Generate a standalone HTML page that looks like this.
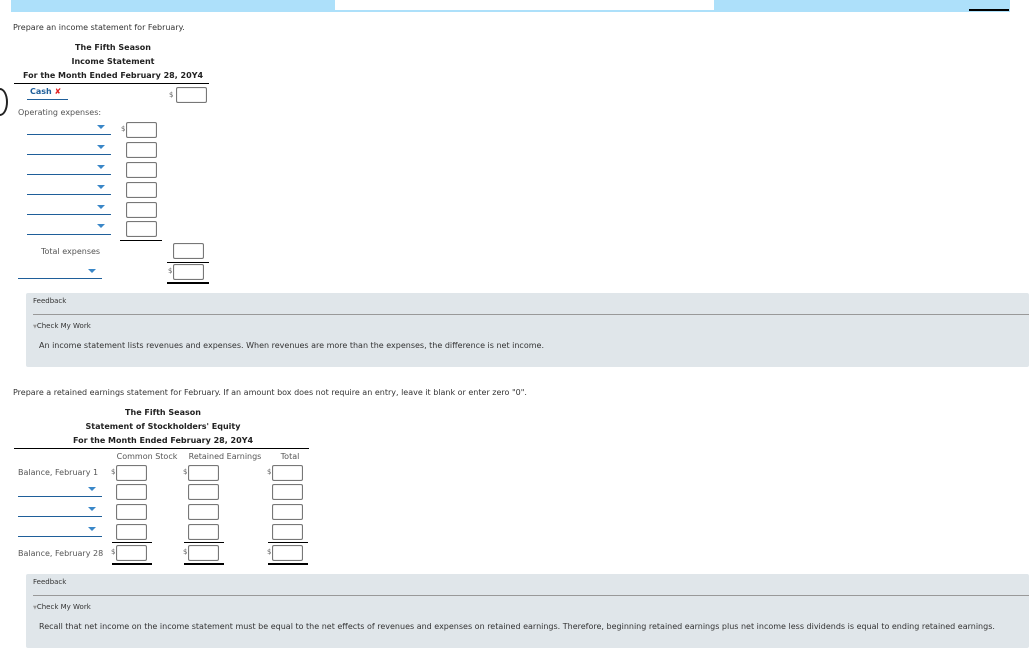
<!DOCTYPE html>
<html><head><meta charset="utf-8"><style>
body{margin:0;width:1029px;height:658px;background:#fff;position:relative;overflow:hidden;font-family:"DejaVu Sans","Liberation Sans",sans-serif;font-size:8px;color:#333}
.a{position:absolute;white-space:nowrap}
.b{font-weight:bold;color:#222}
.c{transform:translateX(-50%)}
.box{position:absolute;width:29px;height:14px;border:1px solid #777;border-radius:2px;background:#fff;box-shadow:inset 0 0 1px #aaa}
.dd{position:absolute;height:1px;background:#1f5f9a}
.ar{position:absolute;width:0;height:0;border-left:4px solid transparent;border-right:4px solid transparent;border-top:4px solid #3a87c8}
.ln{position:absolute;height:1px;background:#000}
.dl{position:absolute;height:2px;background:#000}
.d{position:absolute;font-size:7px;color:#666}
.fb{position:absolute;left:26px;width:1003px;height:74px;background:#e0e6ea;border-radius:2px}
</style></head><body>
<div class="a" style="left:11px;top:0;width:324px;height:12px;background:#ade0fa"></div>
<div class="a" style="left:335px;top:10px;width:379px;height:2px;background:#ade0fa"></div>
<div class="a" style="left:714px;top:0;width:296px;height:12px;background:#ade0fa"></div>
<div class="a" style="left:969px;top:9px;width:40px;height:2px;background:#000"></div>

<div class="a" style="left:13px;top:23px">Prepare an income statement for February.</div>
<div class="a b c" style="left:113px;top:43px">The Fifth Season</div>
<div class="a b c" style="left:113px;top:57px">Income Statement</div>
<div class="a b c" style="left:113px;top:71px">For the Month Ended February 28, 20Y4</div>
<div class="ln" style="left:14px;top:83px;width:195px"></div>
<div class="a" style="left:-8px;top:88px;width:12px;height:24px;border:2px solid #222;border-radius:50%"></div>
<div class="a b" style="left:30px;top:87px;color:#1f5f9a">Cash <span style="color:#e02020">✘</span></div>
<div class="dd" style="left:27px;top:99px;width:41px"></div>
<div class="d" style="left:169px;top:91px">$</div><div class="box" style="left:176px;top:87px"></div>
<div class="a" style="left:18px;top:108px;color:#555">Operating expenses:</div>

<div class="dd" style="left:27px;top:134px;width:84px"></div><div class="ar" style="left:97px;top:125px"></div>
<div class="dd" style="left:27px;top:154px;width:84px"></div><div class="ar" style="left:97px;top:145px"></div>
<div class="dd" style="left:27px;top:174px;width:84px"></div><div class="ar" style="left:97px;top:165px"></div>
<div class="dd" style="left:27px;top:194px;width:84px"></div><div class="ar" style="left:97px;top:185px"></div>
<div class="dd" style="left:27px;top:214px;width:84px"></div><div class="ar" style="left:97px;top:205px"></div>
<div class="dd" style="left:27px;top:234px;width:84px"></div><div class="ar" style="left:97px;top:224px"></div>
<div class="d" style="left:121px;top:125px">$</div>
<div class="box" style="left:126px;top:122px"></div>
<div class="box" style="left:126px;top:142px"></div>
<div class="box" style="left:126px;top:162px"></div>
<div class="box" style="left:126px;top:182px"></div>
<div class="box" style="left:126px;top:202px"></div>
<div class="box" style="left:126px;top:221px"></div>
<div class="ln" style="left:120px;top:240px;width:42px"></div>
<div class="a" style="left:41px;top:247px;color:#555">Total expenses</div>
<div class="box" style="left:173px;top:243px"></div>
<div class="ln" style="left:167px;top:262px;width:42px"></div>
<div class="dd" style="left:18px;top:278px;width:84px"></div><div class="ar" style="left:88px;top:269px"></div>
<div class="d" style="left:168px;top:267px">$</div><div class="box" style="left:173px;top:264px"></div>
<div class="dl" style="left:167px;top:282px;width:42px"></div>

<div class="fb" style="top:293px"></div>
<div class="a" style="left:33px;top:297px;font-size:7px">Feedback</div>
<div class="a" style="left:33px;top:314px;width:996px;height:1px;background:#999"></div>
<div class="a" style="left:33px;top:322px;font-size:7px"><span style="color:#999;font-size:5px">▼</span>Check My Work</div>
<div class="a" style="left:39px;top:341px">An income statement lists revenues and expenses. When revenues are more than the expenses, the difference is net income.</div>

<div class="a" style="left:13px;top:388px">Prepare a retained earnings statement for February. If an amount box does not require an entry, leave it blank or enter zero "0".</div>
<div class="a b c" style="left:163px;top:408px">The Fifth Season</div>
<div class="a b c" style="left:163px;top:422px">Statement of Stockholders' Equity</div>
<div class="a b c" style="left:163px;top:436px">For the Month Ended February 28, 20Y4</div>
<div class="ln" style="left:14px;top:448px;width:295px"></div>
<div class="a c" style="left:147px;top:452px;color:#555">Common Stock</div>
<div class="a c" style="left:225px;top:452px;color:#555">Retained Earnings</div>
<div class="a c" style="left:290px;top:452px;color:#555">Total</div>
<div class="a" style="left:18px;top:468px;color:#555">Balance, February 1</div>
<div class="a" style="left:18px;top:549px;color:#555">Balance, February 28</div>
<div class="dd" style="left:18px;top:496px;width:84px"></div><div class="ar" style="left:88px;top:487px"></div>
<div class="dd" style="left:18px;top:516px;width:84px"></div><div class="ar" style="left:88px;top:507px"></div>
<div class="dd" style="left:18px;top:536px;width:84px"></div><div class="ar" style="left:88px;top:527px"></div>

<div class="d" style="left:111px;top:468px">$</div><div class="d" style="left:183px;top:468px">$</div><div class="d" style="left:267px;top:468px">$</div>
<div class="d" style="left:111px;top:548px">$</div><div class="d" style="left:183px;top:548px">$</div><div class="d" style="left:267px;top:548px">$</div>

<div class="box" style="left:116px;top:465px"></div><div class="box" style="left:188px;top:465px"></div><div class="box" style="left:272px;top:465px"></div>
<div class="box" style="left:116px;top:484px"></div><div class="box" style="left:188px;top:484px"></div><div class="box" style="left:272px;top:484px"></div>
<div class="box" style="left:116px;top:504px"></div><div class="box" style="left:188px;top:504px"></div><div class="box" style="left:272px;top:504px"></div>
<div class="box" style="left:116px;top:524px"></div><div class="box" style="left:188px;top:524px"></div><div class="box" style="left:272px;top:524px"></div>
<div class="ln" style="left:112px;top:542px;width:40px"></div><div class="ln" style="left:184px;top:542px;width:40px"></div><div class="ln" style="left:268px;top:542px;width:40px"></div>
<div class="box" style="left:116px;top:545px"></div><div class="box" style="left:188px;top:545px"></div><div class="box" style="left:272px;top:545px"></div>
<div class="dl" style="left:112px;top:563px;width:40px"></div><div class="dl" style="left:184px;top:563px;width:40px"></div><div class="dl" style="left:268px;top:563px;width:40px"></div>

<div class="fb" style="top:574px"></div>
<div class="a" style="left:33px;top:578px;font-size:7px">Feedback</div>
<div class="a" style="left:33px;top:595px;width:996px;height:1px;background:#999"></div>
<div class="a" style="left:33px;top:603px;font-size:7px"><span style="color:#999;font-size:5px">▼</span>Check My Work</div>
<div class="a" style="left:39px;top:622px">Recall that net income on the income statement must be equal to the net effects of revenues and expenses on retained earnings. Therefore, beginning retained earnings plus net income less dividends is equal to ending retained earnings.</div>
</body></html>
